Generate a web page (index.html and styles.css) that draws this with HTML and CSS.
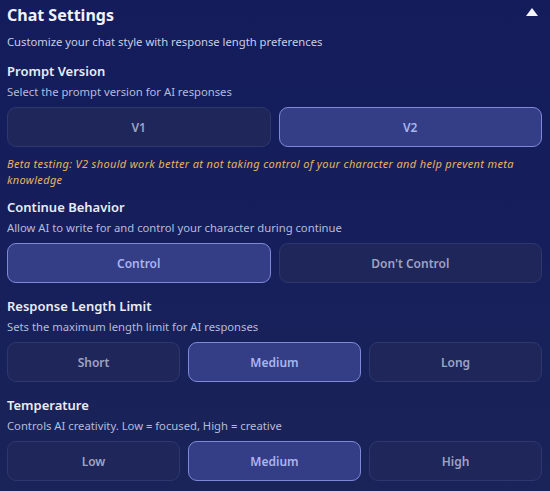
FILE: index.html
```html
<!DOCTYPE html>
<html>
<head>
<meta charset="utf-8">
<link rel="stylesheet" href="styles.css">
</head>
<body>
<div class="panel">
  <div class="header">
    <h1 class="title">Chat Settings</h1>
    <span class="caret"></span>
  </div>
  <p class="subtitle">Customize your chat style with response length preferences</p>

  <section class="section">
    <h2 class="label">Prompt Version</h2>
    <p class="desc">Select the prompt version for AI responses</p>
    <div class="options">
      <button class="opt">V1</button>
      <button class="opt active">V2</button>
    </div>
    <p class="note">Beta testing: V2 should work better at not taking control of your character and help prevent meta knowledge</p>
  </section>

  <section class="section">
    <h2 class="label">Continue Behavior</h2>
    <p class="desc">Allow AI to write for and control your character during continue</p>
    <div class="options">
      <button class="opt active">Control</button>
      <button class="opt">Don't Control</button>
    </div>
  </section>

  <section class="section">
    <h2 class="label">Response Length Limit</h2>
    <p class="desc">Sets the maximum length limit for AI responses</p>
    <div class="options">
      <button class="opt">Short</button>
      <button class="opt active">Medium</button>
      <button class="opt">Long</button>
    </div>
  </section>

  <section class="section">
    <h2 class="label">Temperature</h2>
    <p class="desc">Controls AI creativity. Low = focused, High = creative</p>
    <div class="options">
      <button class="opt">Low</button>
      <button class="opt active">Medium</button>
      <button class="opt">High</button>
    </div>
  </section>
</div>
</body>
</html>
```

FILE: styles.css
```css
html, body {
  margin: 0;
  padding: 0;
  height: 100%;
}
body {
  background: linear-gradient(180deg, #141c5c 0%, #161f5b 50%, #1a2458 100%);
  font-family: "Noto Sans", "Open Sans", sans-serif;
  color: #e6e8f5;
  width: 550px;
  height: 491px;
  overflow: hidden;
}
.panel {
  padding: 5px 8px 0 7px;
  display: flex;
  flex-direction: column;
}
.header {
  display: flex;
  justify-content: space-between;
  align-items: center;
  height: 20px;
}
.title {
  margin: 0;
  font-size: 16px;
  line-height: 20px;
  font-weight: 700;
  color: #f1f2fa;
}
.caret {
  width: 0;
  height: 0;
  border-left: 6px solid transparent;
  border-right: 6px solid transparent;
  border-bottom: 8px solid #f4f5fb;
  margin-right: 4px;
  margin-top: -6px;
}
.subtitle {
  margin: 9px 0 0;
  font-size: 11.25px;
  line-height: 16px;
  color: #c9cde6;
}
.section {
  margin-top: 12px;
  display: flex;
  flex-direction: column;
}
.section + .section {
  margin-top: 10px;
}
.section:nth-of-type(3), .section:nth-of-type(4) {
  margin-top: 14px;
}
.label {
  margin: 0;
  font-size: 13px;
  line-height: 18px;
  font-weight: 600;
  color: #e9ebf7;
}
.desc {
  margin: 4px 0 0;
  font-size: 11.25px;
  line-height: 16px;
  color: #b6bbd9;
}
.options {
  margin-top: 7px;
  display: flex;
  gap: 8px;
}
.opt {
  flex: 1;
  height: 40px;
  border-radius: 9px;
  border: 1px solid #2e376e;
  background: #1f275a;
  color: #9ea3c4;
  font-family: "Noto Sans", "Open Sans", sans-serif;
  font-size: 12px;
  font-weight: 600;
  padding: 0;
}
.opt.active {
  border: 1.5px solid #7e8ad9;
  background: #343e86;
  color: #aab4ef;
}
.note {
  margin: 9px 0 0;
  max-width: 510px;
  font-size: 11px;
  letter-spacing: 0.35px;
  line-height: 16px;
  font-style: italic;
  color: #e8b35c;
}
```
